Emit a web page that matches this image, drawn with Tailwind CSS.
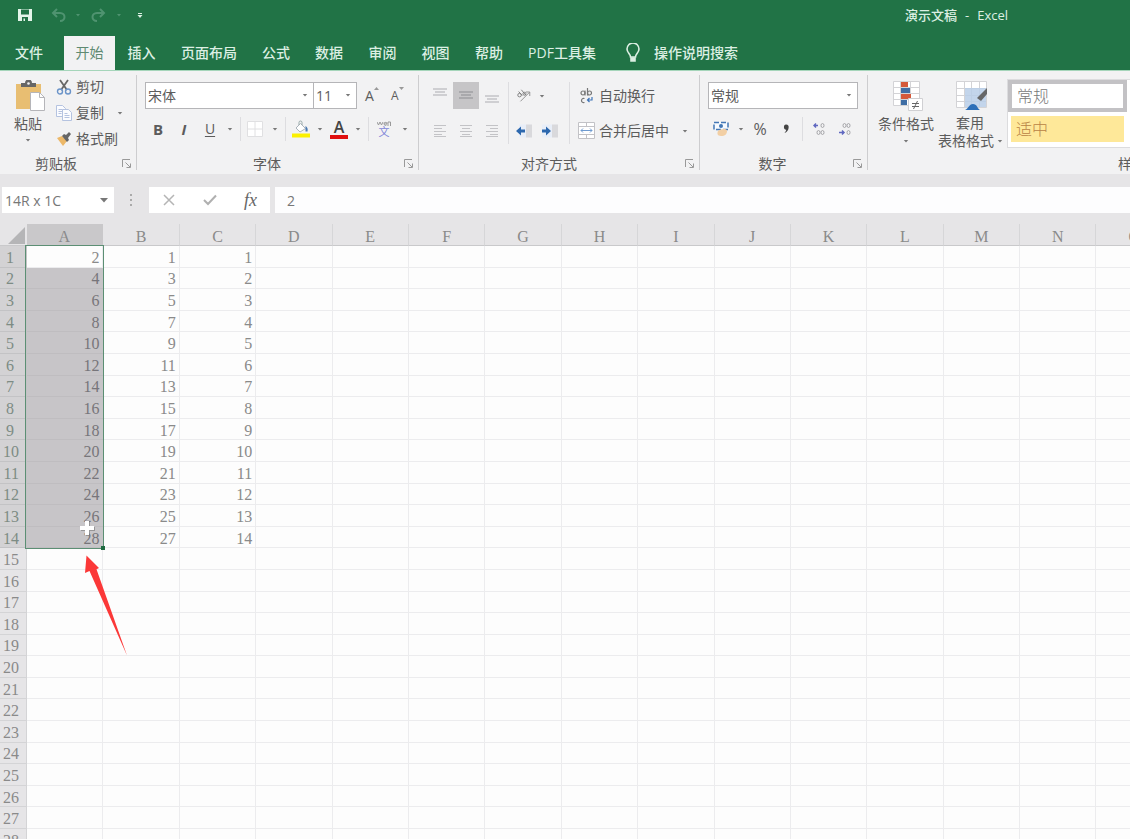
<!DOCTYPE html>
<html lang="zh-CN">
<head>
<meta charset="utf-8">
<title>演示文稿 - Excel</title>
<script src="https://cdn.jsdelivr.net/npm/@tailwindcss/browser@4"></script>
</head>
<body class="flex h-screen flex-col overflow-hidden bg-[#e6e5e7] font-['Open_Sans','Noto_Sans_CJK_SC',sans-serif] text-sm leading-5 text-[#5c5c5c]">

<svg class="hidden">
  <symbol id="caret" viewBox="0 0 8 8"><path d="M1.8 3h4.4L4 5.6z" fill="#777"/></symbol>
  <symbol id="launch" viewBox="0 0 10 10"><path d="M.5 8V.5H8M3.5 3.5l4.500 4.500M8.500 4.500v4h-4" fill="none" stroke="#999"/></symbol>
</svg>

<header class="shrink-0 bg-[#217346] text-[#dcefe3]">
  <div class="flex h-[30px] items-center">
    <div class="flex w-[905px] shrink-0 items-center pl-[18px]">
      <button aria-label="保存" class="w-[14px]"><svg width="14" height="14" viewBox="0 0 14 14"><path d="M0 1h14v12H0z" fill="#e4f5ea"/><path d="M3 1.500h8v5H3zM4 9h6v4H7v-2.500H5.500V13H4z" fill="#217346"/></svg></button>
      <button aria-label="撤销" class="ml-[19px] w-4"><svg width="16" height="14" viewBox="0 0 16 14" fill="none" stroke="#4f9370" stroke-width="2"><path d="M6 1L2 5l4 4M2 5h7c3 0 4.500 2 4.500 4S12 13 9 13"/></svg></button>
      <svg class="ml-[7px]" width="8" height="8" viewBox="0 0 8 8"><path d="M2 3h4L4 5.500z" fill="#4f9370"/></svg>
      <button aria-label="恢复" class="ml-2 w-4"><svg width="16" height="14" viewBox="0 0 16 14" fill="none" stroke="#4f9370" stroke-width="2"><path d="M10 1l4 4-4 4M14 5H7C4 5 2.500 7 2.500 9S4 13 7 13"/></svg></button>
      <svg class="ml-[9px]" width="8" height="8" viewBox="0 0 8 8"><path d="M2 3h4L4 5.500z" fill="#4f9370"/></svg>
      <button aria-label="自定义快速访问工具栏" class="ml-[13px] w-2"><svg width="8" height="8" viewBox="0 0 8 8"><path d="M2 2h4v1H2zM1.500 4h5L4 7z" fill="#dcefe3"/></svg></button>
    </div>
    <h1 class="flex gap-2 text-[13px] font-medium"><span>演示文稿</span><span>-</span><span>Excel</span></h1>
  </div>
  <nav class="mt-[6px] flex h-[34px] items-center text-[14px] font-medium whitespace-nowrap">
    <button class="w-[58px]">文件</button>
    <button class="ml-[6px] h-full w-[51px] bg-[#f2f2f3] font-normal text-[#5f8a72]">开始</button>
    <button class="w-[53px]">插入</button>
    <button class="w-[82px]">页面布局</button>
    <button class="w-[52px]">公式</button>
    <button class="w-[54px]">数据</button>
    <button class="w-[53px]">审阅</button>
    <button class="w-[53px]">视图</button>
    <button class="w-[54px]">帮助</button>
    <button class="w-[92px]">PDF工具集</button>
    <button class="ml-[18px] flex items-center gap-[14px]"><svg width="14" height="20" viewBox="0 0 14 20" fill="none" stroke="#dcefe3" stroke-width="1.600"><path d="M4.500 14c0-3-3.500-4-3.500-8a6 6 0 0 1 12 0c0 4-3.500 5-3.500 8z"/><path d="M5 15h4v3H5z" fill="#dcefe3"/></svg>操作说明搜索</button>
  </nav>
</header>

<section aria-label="功能区" class="flex h-[104px] shrink-0 overflow-hidden border-t border-[#a5d5ba] bg-[#f2f2f3] whitespace-nowrap">

  <div class="flex w-[136px] shrink-0 flex-col">
    <div class="flex h-[84px] pl-[10px]">
      <button class="flex w-9 flex-col items-center pt-[9px]">
        <svg class="ml-1" width="32" height="32" viewBox="0 0 32 32"><path d="M2 4h25v25H2z" fill="#e8be72"/><path d="M7 3h4a3.500 3.500 0 0 1 7 0h4v4H7z" fill="#666"/><circle cx="14.500" cy="3.500" r="1.300" fill="#f2f2f3"/><path d="M16.500 12.500h9l5 5v13h-14z" fill="#fff" stroke="#b5b5b9"/><path d="M25.500 12.500v5h5" fill="none" stroke="#b5b5b9"/></svg>
        <span class="mt-[2px]">粘贴</span>
        <svg class="mt-[2px] shrink-0" width="8" height="8"><use href="#caret"/></svg>
      </button>
      <div class="ml-[10px] flex flex-col gap-[6px] pt-[6px]">
        <button class="flex items-center gap-1"><svg width="16" height="16" viewBox="0 0 16 16" fill="none"><path d="M4 1l7 10M12 1L5 11" stroke="#666" stroke-width="1.800"/><circle cx="4" cy="12.500" r="2.500" stroke="#6b94c9" stroke-width="1.400"/><circle cx="12" cy="12.500" r="2.500" stroke="#6b94c9" stroke-width="1.400"/></svg>剪切</button>
        <button class="flex items-center gap-1"><svg width="16" height="16" viewBox="0 0 16 16" fill="#fbfcff" stroke="#b5c3e0"><path d="M.5.500h6l3 3v8h-9zM2.500 4.500h4M2.500 6.500h4M2.500 8.500h3"/><path d="M6.500 4.500h6l3 3v8h-9z"/><path d="M8.500 8.500h3M8.500 10.500h5M8.500 12.500h5"/></svg>复制<svg class="ml-2" width="8" height="8"><use href="#caret"/></svg></button>
        <button class="flex items-center gap-1"><svg width="16" height="16" viewBox="0 0 16 16"><path d="M1 7l5-2 5 5-4 5c-2-3-4-5-6-8z" fill="#ecb869"/><path d="M6 5l2-2 2 1 3-3 2 2-3 4 1 2-2 2z" fill="#666"/></svg>格式刷</button>
      </div>
    </div>
    <div class="flex h-5 items-center pr-[4px]"><h2 class="w-28 text-center">剪贴板</h2><button aria-label="剪贴板设置" class="ml-auto"><svg width="10" height="10"><use href="#launch"/></svg></button></div>
  </div>

  <div class="relative flex w-[282px] shrink-0 flex-col before:absolute before:top-1 before:bottom-1 before:left-0 before:w-px before:bg-[#cdcdcf]">
    <div class="h-[84px] pt-[11px] pl-[9px]">
      <div class="flex h-[27px] items-center">
        <div class="relative h-full w-[169px] border border-[#b5b5b8] bg-white"><select aria-label="字体" class="h-full w-full appearance-none px-[2px] outline-none"><option>宋体</option></select><svg class="absolute top-2 right-1" width="8" height="8"><use href="#caret"/></svg></div>
        <div class="relative -ml-px h-full w-11 border border-[#b5b5b8] bg-white"><select aria-label="字号" class="h-full w-full appearance-none px-[2px] outline-none"><option>11</option></select><svg class="absolute top-2 right-1" width="8" height="8"><use href="#caret"/></svg></div>
        <button aria-label="增大字号" class="ml-[7px] flex w-[26px] text-[14px]"><span class="pl-px">A</span><svg width="5" height="5" viewBox="0 0 5 5"><path d="M0 4l2.500-3L5 4z" fill="#999"/></svg></button>
        <button aria-label="减小字号" class="flex w-[26px] text-[12px]"><span class="pl-px">A</span><svg width="5" height="5" viewBox="0 0 5 5"><path d="M0 1l2.500 3L5 1z" fill="#999"/></svg></button>
      </div>
      <div class="mt-2 flex h-6 items-center">
        <button class="w-[26px] text-[15px] font-bold">B</button>
        <button class="w-[26px] text-[15px] font-bold italic">I</button>
        <button class="w-[26px] underline underline-offset-2">U</button>
        <svg class="ml-[3px]" width="8" height="8"><use href="#caret"/></svg>
        <i class="mx-[6px] h-6 w-px bg-[#dddde0]"></i>
        <button aria-label="边框" class="w-4"><svg width="16" height="16" viewBox="0 0 16 16"><path d="M.5.500h15v15H.5zM8 .5v15M.5 8h15" fill="#fff" stroke="#e0e0e2"/></svg></button>
        <svg class="ml-2" width="8" height="8"><use href="#caret"/></svg>
        <i class="mr-1 ml-[6px] h-6 w-px bg-[#dddde0]"></i>
        <button aria-label="填充颜色" class="ml-[2px] w-[18px]"><svg width="18" height="18" viewBox="0 0 18 18"><path d="M0 13.500h18v4H0z" fill="#fbf000"/><path d="M8.500 3.500l5 5-5.500 3.500-4-4z" fill="#fff" stroke="#aab3bb"/><path d="M7 5V2.500a1.500 1.500 0 0 1 3 0V5" fill="none" stroke="#9aa"/><path d="M13.500 6c2 1 2.500 3 2 5.500h-2z" fill="#4a79b0"/></svg></button>
        <svg class="ml-[6px]" width="8" height="8"><use href="#caret"/></svg>
        <button aria-label="字体颜色" class="ml-[6px] flex w-[18px] flex-col items-center text-[16px] leading-4 font-semibold text-[#444]">A<i class="h-1 w-full bg-[#e01010]"></i></button>
        <svg class="ml-[6px]" width="8" height="8"><use href="#caret"/></svg>
        <i class="mx-[6px] h-6 w-px bg-[#dddde0]"></i>
        <button aria-label="拼音指南" class="flex w-[18px] flex-col items-center"><svg width="14" height="5" viewBox="0 0 14 5" fill="none" stroke="#999"><path d="M0 1l1.500 3L3 1l1.500 3L6 1M7 3h3a1.500 1.500 0 1 0-.5 1M11 5V1h2.500v4"/></svg><span class="text-[11px] leading-3 text-[#7f86d8]">文</span></button>
        <svg class="ml-2" width="8" height="8"><use href="#caret"/></svg>
      </div>
    </div>
    <div class="flex h-5 items-center pr-[4px]"><h2 class="w-[262px] text-center">字体</h2><button aria-label="字体设置" class="ml-auto"><svg width="10" height="10"><use href="#launch"/></svg></button></div>
  </div>

  <div class="relative flex w-[281px] shrink-0 flex-col before:absolute before:top-1 before:bottom-1 before:left-0 before:w-px before:bg-[#cdcdcf]">
    <div class="flex h-[84px] items-start pt-[11px] pl-[9px]">
      <div class="grid grid-cols-[26px_26px_26px] gap-y-2 [&>button]:flex [&>button]:h-[27px] [&>button]:items-center [&>button]:justify-center">
        <button aria-label="顶端对齐"><svg width="14" height="18" viewBox="0 0 14 18" stroke="#cfcfd2" stroke-width="2"><path d="M0 2h14M2 5h10M0 8h14"/></svg></button>
        <button aria-label="垂直居中" class="bg-[#c6c5c7]"><svg width="14" height="18" viewBox="0 0 14 18" stroke="#a9a9ac" stroke-width="2"><path d="M0 5h14M2 8h10M0 11h14"/></svg></button>
        <button aria-label="底端对齐"><svg width="14" height="18" viewBox="0 0 14 18" stroke="#cfcfd2" stroke-width="2"><path d="M0 9h14M2 12h10M0 15h14"/></svg></button>
        <button aria-label="左对齐"><svg width="12" height="14" viewBox="0 0 12 14" stroke="#c3c3c6"><path d="M0 1.500h12M0 4.500h8M0 7.500h12M0 10.500h8M0 12.500h12"/></svg></button>
        <button aria-label="居中"><svg width="12" height="14" viewBox="0 0 12 14" stroke="#c3c3c6"><path d="M0 1.500h12M2 4.500h8M0 7.500h12M2 10.500h8M0 12.500h12"/></svg></button>
        <button aria-label="右对齐"><svg width="12" height="14" viewBox="0 0 12 14" stroke="#c3c3c6"><path d="M0 1.500h12M4 4.500h8M0 7.500h12M4 10.500h8M0 12.500h12"/></svg></button>
      </div>
      <div class="ml-[3px] flex w-[61px] flex-col gap-y-2 border-l border-[#dddde0] pl-[7px]">
        <button aria-label="方向" class="flex h-[27px] items-center gap-[6px]"><svg width="16" height="16" viewBox="0 0 18 16" fill="none" stroke="#777"><path d="M5 14L15 4M11 3.500h4.500V8" stroke="#888"/><circle cx="4" cy="7" r="2"/><path d="M3 3l4 4.500M6 1l5 6"/><circle cx="9.500" cy="5.500" r="1.700"/></svg><svg width="8" height="8"><use href="#caret"/></svg></button>
        <div class="flex h-[27px] items-center gap-[10px]">
          <button aria-label="减少缩进量"><svg width="16" height="14" viewBox="0 0 16 14"><path d="M10 .5h6v13h-6z" fill="#d9d9dc"/><path d="M3 .5h7v13H3z" fill="#e8eef8"/><path d="M0 7l5-4.500V5.500h4v3H5v3z" fill="#2d68ae"/></svg></button>
          <button aria-label="增加缩进量"><svg width="16" height="14" viewBox="0 0 16 14"><path d="M10 .5h6v13h-6z" fill="#d9d9dc"/><path d="M0 .5h10v13H0z" fill="#e8eef8"/><path d="M9 7L4 2.500V5.500H0v3h4v3z" fill="#2d68ae"/></svg></button>
        </div>
      </div>
      <div class="flex flex-col gap-y-2 border-l border-[#dddde0] pl-2">
        <button class="flex h-[27px] items-center gap-[5px]"><svg width="16" height="16" viewBox="0 0 16 16" fill="none" stroke="#777" stroke-width="1.200"><circle cx="5" cy="5" r="2"/><path d="M7 2.500V7.500M9.500 0v7.500"/><circle cx="11.500" cy="5" r="2"/><path d="M6.500 10.500c-4-1-4 5 0 4"/><path d="M14 9v3H9.500M11.500 10l-2 2 2 2" stroke="#3f74b8"/></svg>自动换行</button>
        <button class="flex h-[27px] items-center gap-[4px]"><svg width="17" height="17" viewBox="0 0 17 17" fill="#fff" stroke="#c2c2c6"><path d="M.5.500h16v16H.5zM.5 4.500h16M.5 12.500h16M8.500.500v4M8.500 12.500v4"/><path d="M3 8.500h11M5 6.500l-2 2 2 2M12 6.500l2 2-2 2" fill="none" stroke="#6f9bd0"/></svg>合并后居中<svg class="ml-2" width="8" height="8"><use href="#caret"/></svg></button>
      </div>
    </div>
    <div class="flex h-5 items-center pr-[4px]"><h2 class="w-[262px] text-center">对齐方式</h2><button aria-label="对齐设置" class="ml-auto"><svg width="10" height="10"><use href="#launch"/></svg></button></div>
  </div>

  <div class="relative flex w-[168px] shrink-0 flex-col before:absolute before:top-1 before:bottom-1 before:left-0 before:w-px before:bg-[#cdcdcf]">
    <div class="h-[84px] pt-[11px] pl-[9px]">
      <div class="relative h-[27px] w-[150px] border border-[#b5b5b8] bg-white"><select aria-label="数字格式" class="h-full w-full appearance-none px-[2px] outline-none"><option>常规</option></select><svg class="absolute top-2 right-1" width="8" height="8"><use href="#caret"/></svg></div>
      <div class="mt-2 flex h-6 items-center pl-[5px]">
        <button aria-label="会计数字格式"><svg width="16" height="16" viewBox="0 0 16 16"><path d="M1 1.500h14v7H1z" fill="#f6faff" stroke="#4377b5" stroke-width="1.500" stroke-dasharray="5 2"/><circle cx="8" cy="5" r="2" fill="#4377b5"/><path d="M5 10c2-2 9-3 9 0s-2 5-6 5-4-3-3-5z" fill="#f2cfa4"/></svg></button>
        <svg class="ml-2" width="8" height="8"><use href="#caret"/></svg>
        <button class="ml-2 w-[14px] text-[16px]">%</button>
        <button aria-label="千位分隔样式" class="ml-[13px] w-3"><svg width="12" height="12" viewBox="0 0 12 12"><path d="M6 1.500c2.200 0 3 1.500 2.600 3.500C8.200 7.500 7 9 4.500 10c1-1.200 1.700-2.200 1.700-3.200C3.500 7 3 1.500 6 1.500z" fill="#444"/></svg></button>
        <i class="mx-[10px] h-6 w-px bg-[#dddde0]"></i>
        <button aria-label="增加小数位数" class="w-3"><svg width="12" height="14" viewBox="0 0 12 14" fill="none" stroke="#a5a5a8"><path d="M5 3.500H1M3 1.500l-2 2 2 2" stroke="#6068c0" stroke-width="1.500"/><ellipse cx="9.500" cy="3.500" rx="1.500" ry="2"/><ellipse cx="5.500" cy="10.500" rx="1.500" ry="2"/><ellipse cx="9.500" cy="10.500" rx="1.500" ry="2"/></svg></button>
        <button aria-label="减少小数位数" class="ml-[14px] w-3"><svg width="12" height="14" viewBox="0 0 12 14" fill="none" stroke="#a5a5a8"><path d="M0 10.500h5M3 8.500l2 2-2 2" stroke="#6068c0" stroke-width="1.500"/><ellipse cx="5.500" cy="3.500" rx="1.500" ry="2"/><ellipse cx="9.500" cy="3.500" rx="1.500" ry="2"/><ellipse cx="9.500" cy="10.500" rx="1.500" ry="2"/></svg></button>
      </div>
    </div>
    <div class="flex h-5 items-center pr-[4px]"><h2 class="w-[147px] text-center">数字</h2><button aria-label="数字设置" class="ml-auto"><svg width="10" height="10"><use href="#launch"/></svg></button></div>
  </div>

  <div class="relative flex w-[530px] shrink-0 flex-col before:absolute before:top-1 before:bottom-1 before:left-0 before:w-px before:bg-[#cdcdcf]">
    <div class="flex h-[84px] pl-[10px]">
      <button class="flex w-[58px] flex-col items-center pt-[10px]">
        <svg class="ml-1" width="30" height="30" viewBox="0 0 30 30"><path d="M.5.500h26v24H.5zM.5 6.500h26M.5 12.500h26M.5 18.500h26M7.500.500v24M17.500.500v24" fill="#fff" stroke="#d3d3d6"/><path d="M8 1h7v5H8zM8 13h10v5H8z" fill="#d4593a"/><path d="M8 7h9v5H8zM8 19h6v5H8z" fill="#3f6ea5"/><path d="M15.500 17.500h14v12h-14z" fill="#fff" stroke="#d0d0d3"/><path d="M19 22.500h7M19 25.500h7M24.500 20l-4 8" stroke="#666"/></svg>
        <span class="mt-[3px]">条件格式</span>
        <svg class="mt-[3px]" width="8" height="8"><use href="#caret"/></svg>
      </button>
      <button class="ml-[3px] flex flex-col items-start pt-[10px] leading-[18px]">
        <svg class="ml-[18px]" width="32" height="30" viewBox="0 0 32 30"><path d="M.5.500h30v26H.5zM.5 7.500h30M.5 14.500h30M.5 20.500h30M8.500.500v26M15.500.500v26M23.500.500v26" fill="#fff" stroke="#d3d3d6"/><path d="M9 7h21v19H9z" fill="#b9cee8" opacity=".85"/><path d="M31 7v6l-6 7-4-3z" fill="#666"/><path d="M9 29c3-1 4-6 8-6s4 4 7 6z" fill="#2d6fb8"/></svg>
        <span class="mt-[3px] w-16 text-center">套用</span>
        <span class="flex items-center gap-[2px]">表格格式<svg width="8" height="8"><use href="#caret"/></svg></span>
      </button>
      <div class="mt-2 ml-[3px] h-[69px] w-[340px] border border-[#dcdcde] bg-white text-[16px]">
        <button class="flex h-8 w-[119px] items-center border-4 border-[#c3c2c5] bg-white pl-[5px] font-light text-[#777]">常规</button>
        <button class="mt-1 ml-[3px] flex h-[26px] w-[113px] items-center bg-[#fee899] pl-[5px] font-light text-[#b98345]">适中</button>
      </div>
    </div>
    <div class="flex h-5 items-center"><h2 class="w-full text-center">样式</h2></div>
  </div>
</section>

<section aria-label="编辑栏" class="flex shrink-0 pt-[13px] pb-[11px] pl-[2px] text-[#777]">
  <div class="relative h-[26px] w-28 bg-white"><input aria-label="名称框" value="14R x 1C" class="h-full w-full pl-[3px] outline-none"><svg class="absolute top-2 right-[5px]" width="10" height="10" viewBox="0 0 10 10"><path d="M1 3h8L5 7.500z" fill="#777"/></svg></div>
  <svg class="mx-4 self-center" width="3" height="14" viewBox="0 0 3 14" fill="#aaa"><path d="M0 1h2v2H0zM0 6h2v2H0zM0 11h2v2H0z"/></svg>
  <div class="flex h-[26px] w-[121px] items-center bg-white">
    <button aria-label="取消" class="flex w-10 justify-center"><svg width="12" height="12" viewBox="0 0 12 12"><path d="M1 1l10 10M11 1L1 11" stroke="#b5b5b5" stroke-width="1.500"/></svg></button>
    <button aria-label="输入" class="flex w-[42px] justify-center"><svg width="14" height="12" viewBox="0 0 14 12"><path d="M1 6l4 4 8-8.500" fill="none" stroke="#b0b0b0" stroke-width="2"/></svg></button>
    <button aria-label="插入函数" class="w-[39px] font-['Liberation_Serif',serif] text-[18px] text-[#666] italic">fx</button>
  </div>
  <input aria-label="公式" value="2" class="ml-[5px] h-[26px] min-w-0 flex-1 bg-[#fdfdfe] pl-3 outline-none">
</section>

<main class="relative min-h-0 flex-1 overflow-hidden bg-[#fdfdfd] font-['Liberation_Serif','Noto_Sans_CJK_SC',serif] text-[16px] leading-4 text-[#8a8a8a]">
  <table class="w-[1173px] table-fixed border-separate border-spacing-0">
    <thead>
      <tr id="columns" class="h-[22px] bg-[#e6e5e7]">
        <th class="w-[27px] border-b border-[#c9c9cb] p-0"><svg class="ml-2 block" width="17" height="18" viewBox="0 0 17 18"><path d="M17 1v17H0z" fill="#b5b5b7"/></svg></th>
      </tr>
    </thead>
    <tbody id="rows" class="h-[605px]"></tbody>
  </table>
  <div class="pointer-events-none absolute top-[21px] left-[25px] h-[304px] w-[79px] border border-[#5c8f74]"></div>
  <div class="pointer-events-none absolute top-[322px] left-[101px] size-[4px] bg-[#1f6b41]"></div>
  <svg class="pointer-events-none absolute top-[296px] left-[79px]" width="16" height="16" viewBox="0 0 16 16"><path d="M6 1h4v5h5v4h-5v5H6v-5H1V6h5z" fill="#777" transform="translate(1 1)" opacity=".6"/><path d="M6 1h4v5h5v4h-5v5H6v-5H1V6h5z" fill="#fff"/></svg>
  <svg class="pointer-events-none absolute top-[331px] left-[84px]" width="44" height="102" viewBox="0 0 44 102"><path d="M2.500.500L15 13l-2.500 1.200L43 100.500 5.500 16 1 18z" fill="#fb3838"/></svg>
</main>

<script>
const head = document.getElementById('columns');
'ABCDEFGHIJKLMNO'.split('').forEach((letter, i) => {
  const th = document.createElement('th');
  th.scope = 'col';
  th.className = i === 0
    ? 'border-b border-[#9bb5a6] bg-[#c9c8ca] p-0 pt-1 pr-[2px] font-normal leading-4'
    : 'border-r border-b border-r-[#d6d6d8] border-b-[#c9c9cb] p-0 pt-1 font-normal leading-4';
  th.textContent = letter;
  head.append(th);
});
const body = document.getElementById('rows');
for (let r = 1; r <= 28; r++) {
  const tr = document.createElement('tr');
  const th = document.createElement('th');
  th.scope = 'row';
  th.className = r <= 14
    ? 'border-r border-b border-[#c3c3c5] bg-[#d3d2d4] p-0 pt-[3px] pr-[7px] text-right font-normal text-[#7d8c84]'
    : 'border-r border-b border-[#d4d4d6] bg-[#e6e5e7] p-0 pt-[3px] pr-[7px] text-right font-normal';
  th.textContent = r;
  if (r < 10) th.classList.replace('pr-[7px]', 'pr-[12px]');
  tr.append(th);
  const values = r <= 14 ? [2 * r, 2 * r - 1, r] : [];
  for (let c = 0; c < 15; c++) {
    const td = document.createElement('td');
    td.className = c === 0 && r > 1 && r <= 14
      ? 'border-b border-[#bfbdc0] bg-[#c7c5c8] p-0 pt-[3px] pr-1 text-right text-[#77757a]'
      : 'border-r border-b border-[#ececee] p-0 pt-[3px] pr-[3px] text-right';
    td.textContent = values[c] ?? '';
    tr.append(td);
  }
  body.append(tr);
}
</script>
</body>
</html>
